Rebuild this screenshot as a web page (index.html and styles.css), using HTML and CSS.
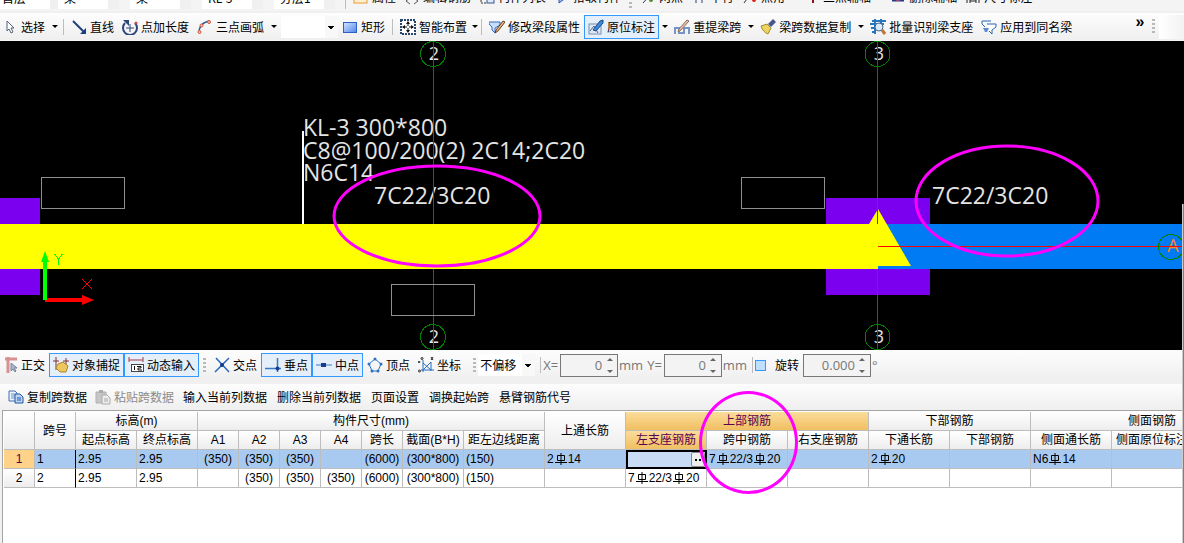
FILE: index.html
```html
<!DOCTYPE html>
<html lang="zh-CN">
<head>
<meta charset="utf-8">
<title>梁原位标注</title>
<link rel="stylesheet" href="styles.css">
</head>
<body>
<svg class="defs" aria-hidden="true">
  <defs>
    <linearGradient id="blueFill" x1="0" y1="0" x2="1" y2="1"><stop offset="0" stop-color="#d4e6ff"/><stop offset="1" stop-color="#4f86ea"/></linearGradient>
    <symbol id="rebar" viewBox="0 0 12 12"><path d="M2.500 2.500h7v5h-7zM0 9.500h12M6 0v12" fill="none" stroke="#000" stroke-width="1"/></symbol>
  </defs>
</svg>
<div class="app">
  <div class="strip">
    <select class="field" aria-label="楼层"><option>首层</option></select>
    <select class="field" aria-label="构件类别"><option>梁</option></select>
    <select class="field" aria-label="构件类型"><option>梁</option></select>
    <select class="field" aria-label="构件名称"><option>KL-3</option></select>
    <select class="field" aria-label="分层"><option>分层1</option></select>
    <span class="sep"></span>
    <button class="btn"><svg class="ic" viewBox="0 0 16 16"><rect x="1" y="1" width="13" height="13" fill="#fff0cd" stroke="#e69b32"/><path d="M3 11l3-5 3 5 3-5" stroke="#c77b16" fill="none"/></svg>属性</button>
    <button class="btn"><svg class="ic" viewBox="0 0 16 16"><path d="M6 9l-4 3 4 3M10 9l4 3-4 3" stroke="#555" fill="none"/></svg>编辑钢筋</button>
    <button class="btn"><svg class="ic" viewBox="0 0 16 16"><path d="M2 2v12h5" stroke="#333" stroke-dasharray="2 1" fill="none"/><rect x="8" y="4" width="7" height="10" fill="#dde8fa" stroke="#35558e"/></svg>构件列表</button>
    <button class="btn"><svg class="ic" viewBox="0 0 16 16"><path d="M5 2v12l8-6z" fill="#9ab8f5" stroke="#3356b0"/></svg>拾取构件</button>
    <span class="grip"></span>
    <button class="btn"><svg class="ic" viewBox="0 0 16 16"><path d="M3 14L12 4" stroke="#333"/><circle cx="11" cy="11" r="2" fill="#4b8b32"/></svg>两点</button>
    <button class="btn"><svg class="ic" viewBox="0 0 16 16"><path d="M5 2v12M11 2v12" stroke="#333a79"/></svg>平行</button>
    <button class="btn"><svg class="ic" viewBox="0 0 16 16"><path d="M2 14L10 3" stroke="#333"/><circle cx="12" cy="11" r="2" fill="#d82020"/></svg>点角</button>
    <span class="drop"></span>
    <button class="btn"><svg class="ic" viewBox="0 0 16 16"><path d="M9 14V5" stroke="#8b1515" stroke-width="2"/><circle cx="6" cy="8" r="2" fill="#d82020"/></svg>三点辅轴</button>
    <span class="drop"></span>
    <button class="btn"><svg class="ic" viewBox="0 0 16 16"><path d="M2 11h12" stroke="#283b80" stroke-width="3"/><circle cx="8" cy="9" r="3" fill="#c4436d"/></svg>删除辅轴</button>
    <button class="btn"><svg class="ic" viewBox="0 0 16 16"><path d="M2 14V4h12v10M5 12h6M5 7v7M11 7v7" stroke="#222" fill="none"/></svg>尺寸标注</button>
  </div>

  <div class="bar main">
    <button class="btn first"><svg class="ic slim" viewBox="0 0 12 16"><path d="M2 2v10l2-2 2 4 2-1-2-4h3z" fill="#fff" stroke="#53617a"/></svg>选择</button>
    <button class="drop" aria-label="更多选择"></button>
    <span class="sep"></span>
    <button class="btn"><svg class="ic" viewBox="0 0 16 16"><path d="M2 2l11 11" stroke="#1c3f7d" stroke-width="2"/><path d="M15 15V9l-6 6z" fill="#1c3f7d"/></svg>直线</button>
    <button class="btn"><svg class="ic" viewBox="0 0 16 16"><path d="M3 4a7 7 0 1 0 10 0" fill="none" stroke="#2b4779" stroke-width="2"/><path d="M1 1h6v6z" fill="#2b4779"/><path d="M8 5v8M4 9h8" stroke="#2b4779"/><circle cx="14" cy="4" r="1.500" fill="#c84a4a"/></svg>点加长度</button>
    <button class="btn"><svg class="ic" viewBox="0 0 16 16"><path d="M2 14C2 7 6 3 13 2" fill="none" stroke="#3a5d93" stroke-width="1.500"/><g fill="#f3c0ae" stroke="#cf5a3c"><circle cx="2.500" cy="13" r="1.500"/><circle cx="4.500" cy="6.500" r="1.500"/><circle cx="12" cy="3" r="1.500"/></g></svg>三点画弧</button>
    <button class="drop" aria-label="更多画弧"></button>
    <select class="blank" aria-label="绘制方式"><option></option></select>
    <button class="btn"><svg class="ic" viewBox="0 0 16 16"><rect x="1.500" y="3.500" width="13" height="10" fill="url(#blueFill)" stroke="#2d5fc4"/></svg>矩形</button>
    <span class="sep"></span>
    <button class="btn"><svg class="ic" viewBox="0 0 16 16"><rect x="1" y="1" width="14" height="14" fill="#fff" stroke="#26456f" stroke-width="2" stroke-dasharray="2 1"/><path d="M8 3v4M8 9v4M3 8h4M9 8h4" stroke="#111" fill="none"/><path d="M6 5l2-3 2 3zM6 11l2 3 2-3zM5 6L2 8l3 2zM11 6l3 2-3 2z" fill="#111"/></svg>智能布置</button>
    <button class="drop tight" aria-label="更多布置"></button>
    <span class="sep"></span>
    <button class="btn"><svg class="ic" viewBox="0 0 16 16"><path d="M0 3h11v3L6 9v5l-3-3V8L0 5z" fill="#c7dffb" stroke="#316dbd"/><path d="M7 11l7-9 2 1-7 9-3 2z" fill="#edb574" stroke="#5b412c"/></svg>修改梁段属性</button>
    <button class="btn active" aria-pressed="true"><svg class="ic" viewBox="0 0 16 16"><rect x="1" y="5" width="12" height="10" fill="#dfe8f3" stroke="#7790b4"/><path d="M2 12l4-5 4 7" fill="none" stroke="#44679b"/><path d="M5 11l7-9 3-1v3L8 12z" fill="#3d88d8" stroke="#174b8c"/></svg>原位标注</button>
    <button class="drop" aria-label="更多标注"></button>
    <button class="btn"><svg class="ic" viewBox="0 0 16 16"><path d="M1 15V9h4v5h5V9h5v6" fill="none" stroke="#7495c5" stroke-width="2"/><path d="M5 10l8-9 2 1-8 9-3 2z" fill="#e8c2a5" stroke="#8c6e60"/></svg>重提梁跨</button>
    <button class="drop" aria-label="更多梁跨"></button>
    <button class="btn"><svg class="ic" viewBox="0 0 16 16"><path d="M1 7l6-2 4 4-3 6c-3-1-6-4-7-8z" fill="#ecd463" stroke="#a48a2c"/><path d="M8 5l5-5 3 3-5 5z" fill="#4a568e"/></svg>梁跨数据复制</button>
    <button class="drop" aria-label="更多复制"></button>
    <button class="btn"><svg class="ic" viewBox="0 0 16 16"><path d="M2 2h14M0 5h14M1 9h5M2 13h4M5 0v15M11 0v4" stroke="#2874bd" stroke-width="2"/><circle cx="9" cy="8" r="4" fill="#d9eafa" stroke="#4b6684"/><path d="M12 11l3 4" stroke="#bf7438" stroke-width="3"/></svg>批量识别梁支座</button>
    <button class="btn"><svg class="ic" viewBox="0 0 16 16"><path d="M1 2h9M1 2v3l3 3" stroke="#2a66b0" fill="none"/><path d="M6 5h9v3l-4 3v4l-3-3" fill="#fff" stroke="#2a66b0"/><path d="M2 9h6l-2 4H4z" fill="#5d8cd1"/></svg>应用到同名梁</button>
    <button class="more" aria-label="更多工具">»</button>
    <span class="grip"></span><span class="tail"></span>
  </div>

  <div class="canvas">
    <svg class="drawing" role="img" aria-label="梁平面图">
      <g fill="#7b00f0"><rect x="0" y="157" width="40" height="97"/><rect x="826" y="157" width="104" height="97"/></g>
      <rect x="878" y="183" width="100%" height="45" fill="#007bf4"/>
      <rect x="0" y="183" width="878" height="45" fill="#ff0"/>
      <path d="M878 168L911 225H878V183H869Z" fill="#ff0"/>
      <g class="label">
        <text x="303" y="95">KL-3 300*800</text>
        <text x="303" y="118">C8@100/200(2) 2C14;2C20</text>
        <text x="303" y="140">N6C14</text>
        <text x="374" y="163">7C22/3C20</text>
        <text x="932" y="163">7C22/3C20</text>
      </g>
      <g class="axis"><text x="434" y="19">2</text><text x="434" y="302">2</text><text x="879" y="19">3</text><text x="879" y="302">3</text></g>
      <text class="axis amber" x="1173" y="211">A</text>
      <g fill="none" shape-rendering="crispEdges">
        <path d="M433.500 1V183M877.500 1V183M878 205.500H1182" stroke="#f00"/>
        <path d="M433.500 228V309M877.500 228V309" stroke="#008000"/>
        <g stroke="#008000"><circle cx="433" cy="13" r="12.500"/><circle cx="433" cy="296" r="12.500"/><circle cx="877.500" cy="13" r="12.500"/><circle cx="877.500" cy="296" r="12.500"/><circle cx="1171" cy="206" r="12.500"/></g>
        <path d="M41.500 136.500h83v31h-83zM741.500 136.500h83v31h-83zM391.500 243.500h83v31h-83z" stroke="#909090"/>
        <path d="M303 90V183" stroke="#fff" stroke-width="2"/>
        <path d="M54.500 213l4 5 4-5M58.500 218v6" stroke="#0f0"/>
        <path d="M82 238l10 10M92 238l-10 10" stroke="#f00"/>
      </g>
      <path d="M45 259H84" stroke="#f00" stroke-width="4"/><path d="M94 259l-12-5v10z" fill="#f00"/>
      <path d="M45 259V220" stroke="#0f0" stroke-width="4"/><path d="M45 210l4 11h-8z" fill="#0f0"/>
      <g fill="none" stroke="#f0f" stroke-width="3"><ellipse cx="437" cy="175" rx="103" ry="50"/><ellipse cx="1007" cy="160" rx="91" ry="55"/></g>
    </svg>
  </div>

  <div class="bar snap">
    <button class="btn first"><svg class="ic slim" viewBox="0 0 12 16"><path d="M0 2h12M3 0v16" stroke="#d89090" stroke-width="3"/><path d="M6 6v8l2-2 2 3 1-1-2-3h3z" fill="#aeb8cb" stroke="#76839b"/></svg>正交</button>
    <button class="btn active"><svg class="ic" viewBox="0 0 16 16"><path d="M3 0v13M0 4h6M13 1v11M10 4h6" stroke="#872e35" stroke-width="1"/><path d="M5 7l5-2 5 4-2 6H7l-4-4z" fill="#ecc75c" stroke="#ac8530"/></svg>对象捕捉</button>
    <button class="btn active"><svg class="ic" viewBox="0 0 16 16"><path d="M1 0v5M15 0v5M1 3h14" stroke="#a53d4a"/><rect x="3.500" y="7.500" width="12" height="7" fill="#fff" stroke="#444"/><path d="M6.500 9v4M9 9.500h4v1.500h-3v2h4" fill="none" stroke="#111"/></svg>动态输入</button>
    <span class="grip"></span>
    <button class="btn"><svg class="ic" viewBox="0 0 16 16"><path d="M2 1l13 14M15 1L1 15" stroke="#2868c0" stroke-width="1.500"/><circle cx="8" cy="8" r="2" fill="#143a83"/></svg>交点</button>
    <button class="btn active"><svg class="ic" viewBox="0 0 16 16"><path d="M0 11.500h16M12.500 1v14" stroke="#3c78c6" stroke-width="1.500"/><circle cx="12.500" cy="11.500" r="2" fill="#173e8a"/></svg>垂点</button>
    <button class="btn active"><svg class="ic" viewBox="0 0 16 16"><path d="M0 8h16" stroke="#8ab5e5" stroke-width="2"/><rect x="5" y="6" width="5" height="4" fill="#173e8a"/></svg>中点</button>
    <button class="btn"><svg class="ic" viewBox="0 0 16 16"><path d="M8 2l6 5-3 7H5L2 7z" fill="none" stroke="#2d71c5" stroke-width="1"/><g fill="#2d71c5"><circle cx="8" cy="2" r="1.500"/><circle cx="14" cy="7" r="1.500"/><circle cx="2" cy="7" r="1.500"/><circle cx="5" cy="14" r="1.500"/><circle cx="11" cy="14" r="1.500"/></g></svg>顶点</button>
    <button class="btn"><svg class="ic" viewBox="0 0 16 16"><path d="M5 3v12M3 13h13M5 13l8-8M5 6l8 7M13 5v9" stroke="#276dc0" fill="none"/><g fill="none" stroke="#222"><circle cx="1.500" cy="14" r="1"/><circle cx="4" cy="1.500" r="1"/><path d="M0 4l1 2 1-2M13 0l2 3M15 0l-2 3"/></g></svg>坐标</button>
    <span class="grip second"></span>
    <select class="offset" aria-label="偏移方式"><option>不偏移</option></select>
    <span class="sep"></span>
    <label class="dim" for="dx">X=</label><span class="spin"><input id="dx" value="0"><i></i></span><span class="unit">mm</span>
    <label class="dim next" for="dy">Y=</label><span class="spin"><input id="dy" value="0"><i></i></span><span class="unit">mm</span>
    <span class="sep"></span>
    <input type="checkbox" id="rot" class="tick"><label class="rotate" for="rot">旋转</label>
    <span class="spin long"><input aria-label="角度" value="0.000"><i></i></span><span class="unit">°</span>
  </div>

  <div class="panel">
    <div class="bar ops">
      <button class="btn"><svg class="ic" viewBox="0 0 16 16"><path d="M1 2h6l2 2v8H1z" fill="#e9f2fd" stroke="#456fae"/><path d="M3 5h4M3 7h4M3 9h4" stroke="#6d94cc"/><path d="M7 5h5l3 3v6H7z" fill="#bcd5f5" stroke="#2456a2"/><path d="M9 9h4M9 11h4" stroke="#2456a2"/></svg>复制跨数据</button>
      <button class="btn" disabled><svg class="ic" viewBox="0 0 16 16"><path d="M1 3h10v11H1z" fill="#c6c6c6" stroke="#b0b0b0"/><path d="M4 1h4v3H4z" fill="#aaa"/><path d="M7 6h5l3 3v6H7z" fill="#eee" stroke="#aaa"/><path d="M9 10h4M9 12h4" stroke="#aaa"/></svg>粘贴跨数据</button>
      <button class="btn text">输入当前列数据</button>
      <button class="btn text">删除当前列数据</button>
      <button class="btn text">页面设置</button>
      <button class="btn text">调换起始跨</button>
      <button class="btn text">悬臂钢筋代号</button>
    </div>
    <div class="gridbox">
      <table class="grid">
        <colgroup><col class="c31"><col class="c41"><col class="c61" span="2"><col class="c41" span="5"><col class="c61"><col class="c81" span="10"></colgroup>
        <thead>
          <tr><th rowspan="2"></th><th rowspan="2">跨号</th><th colspan="2">标高(m)</th><th colspan="7">构件尺寸(mm)</th><th rowspan="2">上通长筋</th><th colspan="3" class="hot">上部钢筋</th><th colspan="2">下部钢筋</th><th colspan="3">侧面钢筋</th></tr>
          <tr><th>起点标高</th><th>终点标高</th><th>A1</th><th>A2</th><th>A3</th><th>A4</th><th>跨长</th><th>截面(B*H)</th><th>距左边线距离</th><th class="hot">左支座钢筋</th><th>跨中钢筋</th><th>右支座钢筋</th><th>下通长筋</th><th>下部钢筋</th><th>侧面通长筋</th><th>侧面原位标注</th><th></th></tr>
        </thead>
        <tbody>
          <tr class="current"><th>1</th><td class="span">1</td><td>2.95</td><td>2.95</td><td class="mid">(350)</td><td class="mid">(350)</td><td class="mid">(350)</td><td></td><td class="mid">(6000)</td><td class="mid">(300*800)</td><td>(150)</td><td>2<svg class="rb"><use href="#rebar"/></svg>14</td><td class="edit"><button class="dots" aria-label="选择钢筋"><i></i><i></i></button></td><td>7<svg class="rb"><use href="#rebar"/></svg>22/3<svg class="rb"><use href="#rebar"/></svg>20</td><td></td><td>2<svg class="rb"><use href="#rebar"/></svg>20</td><td></td><td>N6<svg class="rb"><use href="#rebar"/></svg>14</td><td></td><td></td></tr>
          <tr><th>2</th><td class="span">2</td><td>2.95</td><td>2.95</td><td></td><td class="mid">(350)</td><td class="mid">(350)</td><td class="mid">(350)</td><td class="mid">(6000)</td><td class="mid">(300*800)</td><td>(150)</td><td></td><td>7<svg class="rb"><use href="#rebar"/></svg>22/3<svg class="rb"><use href="#rebar"/></svg>20</td><td></td><td></td><td></td><td></td><td></td><td></td><td></td></tr>
        </tbody>
      </table>
    </div>
    <span class="ring"></span>
  </div>
  <span class="edge"></span>
</div>
</body>
</html>
```
FILE: styles.css
```css
* { box-sizing: border-box; }
body { margin: 0; background: #f0f0f0; color: #000; font: 12px/16px "Noto Sans CJK SC", sans-serif; }
button, input, select { font: inherit; color: inherit; margin: 0; padding: 0; border: 0; background: none; }
.defs { position: absolute; width: 0; height: 0; }
.app { position: relative; display: flex; flex-direction: column; min-height: 100vh; overflow: hidden; }

.strip { display: flex; align-items: flex-end; height: 11px; padding-bottom: 2px; overflow: hidden; white-space: nowrap; background: #f4f4f4; }
.strip > * { flex: none; }
.field { appearance: none; width: 61px; height: 22px; margin-right: 11px; padding: 0 0 0 6px; background: linear-gradient(90deg, #fff 50px, #f0f0f0 50px); }
.field:first-child { width: 58px; margin-right: 0; padding-left: 2px; }
.field:nth-child(5) { margin-right: 7px; }

.bar { display: flex; align-items: center; white-space: nowrap; background: linear-gradient(#fdfdfd, #efefef); }
.bar > * { flex: none; }
.main { height: 28px; margin-top: 2px; border-bottom: 1px solid #f4f4f4; }
.btn { display: flex; align-items: center; gap: 3px; height: 24px; padding: 0 3px; border: 1px solid transparent; }
.btn:disabled { color: #8c8c8c; }
.btn.first { padding-left: 4px; gap: 4px; }
.btn.active { background: #e5eff9; border-color: #3399ff; }
.ic { width: 16px; height: 16px; flex: none; }
.slim { width: 12px; }
.drop { width: 11px; height: 24px; display: flex; align-items: center; justify-content: center; }
.drop.tight { width: 7px; }
.drop::after { content: ""; border: 3px solid transparent; border-top: 3px solid #000; border-bottom: 0; }
.sep { width: 1px; height: 16px; margin: 0 3px; background: #bdbdbd; }
.grip { width: 3px; height: 15px; margin: 0 4px; background: repeating-linear-gradient(#b8b8b8 0 2px, transparent 2px 4px); }
.grip.second { margin: 0 2px 0 8px; }
.blank, .offset { appearance: none; width: 57px; height: 22px; background: conic-gradient(from 315deg at 50% 100%, #000 90deg, transparent 0) 47px 10px / 6px 3px no-repeat, linear-gradient(90deg, #fff 44px, #f8f8f8 44px); }
.blank { margin-left: 2px; }
.more { margin-left: auto; width: 16px; height: 26px; font: bold 16px/16px "Liberation Sans", sans-serif; padding-bottom: 12px; }
.tail { width: 25px; height: 24px; background: linear-gradient(90deg, #fff, #f2f2f2); }

.canvas { height: 309px; background: #000; }
.drawing { display: block; width: 100%; height: 100%; }
.label { fill: #e4e4e4; font: 23px "Open Sans", sans-serif; }
.axis { fill: #e4e4e4; font: 18px "Open Sans", sans-serif; text-anchor: middle; }
.amber { fill: #f08a28; }

.snap { height: 30px; }
.offset { padding-left: 2px; }
.snap .sep { margin: 0 2px 0 5px; }
.dim, .unit { color: #777; font: 13px/16px "Open Sans", sans-serif; }
.dim.next { margin-left: 4px; }
.spin { display: flex; align-items: center; width: 58px; height: 23px; margin: 0 1px 0 2px; border: 1px solid #777; background: #f3f3f3; color: #777; font: 13px/16px "Open Sans", sans-serif; }
.spin.long { width: 68px; }
.spin input { flex: 1; min-width: 0; text-align: right; }
.spin i { width: 15px; height: 15px; display: flex; flex-direction: column; align-items: center; justify-content: space-between; }
.spin i::before { content: ""; border: 3px solid transparent; border-bottom: 3px solid #666; border-top: 0; }
.spin i::after { content: ""; border: 3px solid transparent; border-top: 3px solid #666; border-bottom: 0; }
.tick { appearance: none; width: 11px; height: 11px; border: 1px solid #3399ff; background: #bfdfff; }
.rotate { margin: 0 2px 0 9px; }

.panel { position: relative; flex: 1; display: flex; flex-direction: column; padding-top: 4px; }
.ops { height: 25px; padding-left: 4px; }
.btn.text { padding: 0 4px; }
.gridbox { flex: 1; margin: 1px 1px 0 2px; padding: 1px 0 0 1px; overflow: hidden; border: 1px solid #a5a5a5; border-right: 0; border-bottom: 0; background: #fff; }
.grid { table-layout: fixed; width: 1270px; border-spacing: 0; font: 12px/16px "Liberation Sans", "Noto Sans CJK SC", sans-serif; white-space: nowrap; }
.c31 { width: 31px; } .c41 { width: 41px; } .c61 { width: 61px; } .c81 { width: 81px; }
.grid th, .grid td { height: 19px; padding: 0; border: solid #bdbdbd; border-width: 0 1px 1px 0; overflow: hidden; }
.grid th { font-weight: normal; background: linear-gradient(#fff, #ededed); }
.grid td { padding-left: 2px; }
.grid .mid { padding: 0; text-align: center; }
.grid .hot { color: #5a0050; background: linear-gradient(#fbdc9c, #f0bf60); }
.grid .span { border-right-color: #000; }
.current td { background: #a8caf0; }
.grid .current th { color: #5a0050; background: #ffd28a; }
.grid .edit { padding: 0; border: 2px solid #000; background: #c8dcf5; }
.dots { display: flex; align-items: center; justify-content: center; gap: 2px; width: 14px; height: 15px; margin-left: auto; border: 1px solid #888; border-radius: 2px; background: #eee; }
.dots i { width: 2px; height: 2px; background: #000; }
.rb { width: 12px; height: 12px; margin: 0 1px; vertical-align: -2px; }
.ring { position: absolute; left: 699px; top: 11px; width: 99px; height: 103px; border: 3px solid #f0f; border-radius: 50%; pointer-events: none; }
.edge { position: absolute; right: 0; top: 204px; bottom: 0; width: 2px; background: #3d8fd9; border-left: 1px solid #ccc; }
```
